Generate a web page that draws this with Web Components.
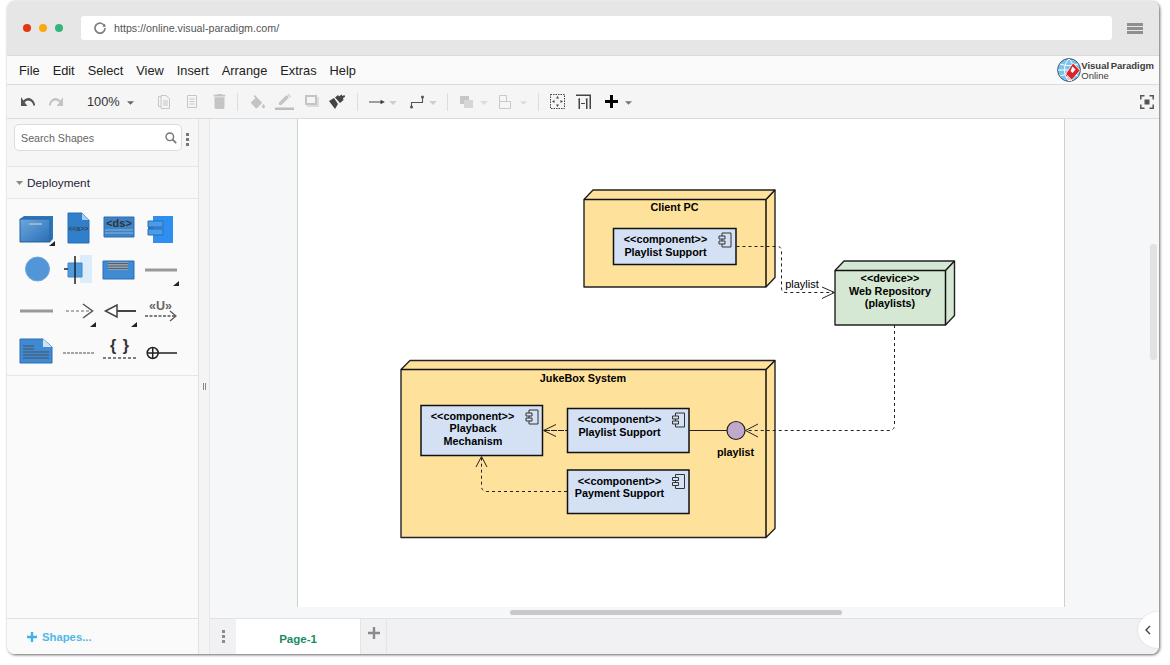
<!DOCTYPE html>
<html>
<head>
<meta charset="utf-8">
<title>Visual Paradigm Online</title>
<style>
html,body{margin:0;padding:0;background:#fff;width:1170px;height:665px;overflow:hidden;font-family:"Liberation Sans",Arial,sans-serif}
body{padding:1px 11px 11px 7px;box-sizing:border-box}
</style>
</head>
<body>
<vp-window>
  <vp-browser-bar url="https://online.visual-paradigm.com/"></vp-browser-bar>
  <vp-menubar></vp-menubar>
  <vp-toolbar></vp-toolbar>
  <vp-workspace>
    <vp-sidebar slot="side"></vp-sidebar>
    <vp-canvas slot="main"><vp-diagram></vp-diagram></vp-canvas>
    <vp-tabs slot="main"></vp-tabs>
  </vp-workspace>
</vp-window>
<script>
function def(name, css, html, init){
  customElements.define(name, class extends HTMLElement{
    connectedCallback(){
      if(this.shadowRoot) return;
      const r=this.attachShadow({mode:'open'});
      r.innerHTML='<style>'+css+'</style>'+(typeof html==='function'?html(this):html);
      if(init) init(r,this);
    }
  });
}

def('vp-window',
`:host{display:flex;flex-direction:column;width:1152px;height:653px;border-radius:8px;overflow:hidden;background:#fafafa;
 box-shadow:1px 1px 3px rgba(0,0,0,.6);font-family:"Liberation Sans",Arial,sans-serif;position:relative}`,
`<slot></slot>`);

def('vp-browser-bar',
`:host{display:flex;align-items:center;height:54px;background:#e6e6e6;border-bottom:1px solid #dadada;padding:0 17px 0 16px;flex:none;box-sizing:content-box;position:relative}
.wrap{display:flex;align-items:center;width:100%;height:100%}
.dot{width:8px;height:8px;border-radius:50%;margin-right:8px;flex:none}
.url{flex:none;width:1031px;height:24px;background:#fff;border-radius:3px;margin-left:10px;display:flex;align-items:center;font-size:10.7px;color:#555}
.url svg{margin:0 8px 0 13px;flex:none}
.menu{margin-left:15px;display:flex;flex-direction:column;gap:1px;width:16px;flex:none}
.menu i{display:block;height:3px;background:#8f8f8f}`,
(h)=>`<div class="wrap">
<span class="dot" style="background:#e5360e"></span><span class="dot" style="background:#fbaa0c"></span><span class="dot" style="background:#30b67c"></span>
<div class="url"><svg width="12" height="12" viewBox="0 0 12 12"><path d="M10.6 4.2A5 5 0 1 0 11 6" fill="none" stroke="#808080" stroke-width="1.7"/><path d="M8.2 4.4 11.6 5 11 1.6z" fill="#808080"/></svg><span>${h.getAttribute('url')}</span></div>
<div class="menu"><i></i><i></i><i></i></div></div>`);

def('vp-menubar',
`:host{display:flex;align-items:center;height:28px;background:#fafafa;border-bottom:1px solid #dcdcdc;padding-left:12px;flex:none;position:relative;font-size:12.8px;color:#222}
span{margin-right:13px;white-space:nowrap}
.logo{margin-left:auto;margin-right:5px;display:flex;align-items:center;gap:0}
.t{display:flex;flex-direction:column;line-height:10px;padding-top:1px}
.t b{font-size:9.5px;font-weight:700;color:#3c3c3c;word-spacing:-1px;white-space:nowrap}
.t em{font-style:normal;font-size:9.5px;color:#3c3c3c}`,
`<span>File</span><span>Edit</span><span>Select</span><span>View</span><span>Insert</span><span>Arrange</span><span>Extras</span><span>Help</span>
<div class="logo"><svg width="24" height="25" viewBox="0 0 24 25">
<circle cx="12" cy="12" r="11.4" fill="#79c4ee" stroke="#41566a" stroke-width="1"/>
<path d="M1 12h22M12 1C6 6 6 18 12 23M12 1c6 5 6 17 0 22M3 6c5 2 13 2 18 0M3 18c5-2 13-2 18 0" fill="none" stroke="#fff" stroke-width="1"/>
<path d="M16 5 23 12.500 14 23 8 17z" fill="#d7252b" stroke="#fff" stroke-width=".7"/>
<path d="M10 18l5 5M8 15l7 7" stroke="#fff" stroke-width=".7"/>
<path d="M15.500 8.500 18.500 11.500 15.500 15 13.500 13z" fill="#fff"/>
</svg><div class="t"><b>Visual Paradigm</b><em>Online</em></div></div>`);

const ic={
 undo:'<svg viewBox="2 7 20 10" width="100%" height="100%" preserveAspectRatio="none"><path fill="#555" d="M12.5 8c-2.65 0-5.05.99-6.9 2.6L2 7v9h9l-3.62-3.62c1.39-1.16 3.16-1.88 5.12-1.88 3.54 0 6.55 2.31 7.6 5.5l2.37-.78C21.08 11.03 17.15 8 12.5 8z"/></svg>',
 redo:'<svg viewBox="2 7 20 10" width="100%" height="100%" preserveAspectRatio="none"><path fill="#c4c4c4" d="M18.4 10.6C16.55 8.99 14.15 8 11.5 8c-4.65 0-8.58 3.03-9.96 7.22L3.9 16c1.05-3.19 4.05-5.5 7.6-5.5 1.95 0 3.73.72 5.12 1.88L13 16h9V7l-3.6 3.6z"/></svg>',
 copy:'<svg viewBox="0 0 12 14" width="100%" height="100%"><g fill="none" stroke="#c6c6c6"><path d="M.5 1.500h5v10h-5z"/><path d="M3 .5h5l3.500 3v10H3z" fill="#f5f5f5"/><path d="M5 6h5M5 8h5M5 10h5"/></g></svg>',
 paste:'<svg viewBox="0 0 10 13" width="100%" height="100%"><g fill="none" stroke="#c6c6c6"><path d="M.5 .5h9v12h-9z"/><path d="M2.500 4h5M2.500 6.500h5M2.500 9h5"/></g></svg>',
 trash:'<svg viewBox="5 3 14 18" width="100%" height="100%"><path fill="#c4c4c4" d="M6 19c0 1.100.9 2 2 2h8c1.100 0 2-.9 2-2V7H6v12zM19 4h-3.500l-1-1h-5l-1 1H5v2h14V4z"/></svg>',
 fill:'<svg viewBox="2 0 20 18" width="100%" height="100%"><path fill="#c4c4c4" d="M16.560 8.940 7.620 0 6.210 1.410l2.380 2.380-5.150 5.150c-.59.59-.59 1.540 0 2.120l5.500 5.500c.29.29.68.44 1.060.44s.77-.15 1.060-.44l5.500-5.500c.59-.58.59-1.530 0-2.120zM19 11.500s-2 2.170-2 3.500c0 1.100.9 2 2 2s2-.9 2-2c0-1.330-2-3.500-2-3.500z"/></svg>',
 line:'<svg viewBox="0 0 19 16" width="100%" height="100%"><path fill="#c4c4c4" d="M4 11V8.500L11.500 1 14 3.500 6.500 11zM12.500 0l1-.0 2.500 2.500-1 1z"/><path fill="#bdbdbd" d="M0 13.500h19v2.500H0z"/></svg>',
 shadow:'<svg viewBox="0 0 14 14" width="100%" height="100%"><path d="M0 0h12v10h-12z" fill="#c4c4c4"/><path d="M2 2h8v6h-8z" fill="#f5f5f5"/><path d="M2 10h10v-8h2v10h-12z" fill="#dcdcdc"/></svg>',
 paint:'<svg viewBox="0 0 16 15" width="100%" height="100%"><path d="M0 7 5 4l4 6-3 5z" fill="#444"/><path d="M6 3.500 9 1l1 1.500L12.500 .5 13.500 2l2-1 .5 2-2 1 .5 2-3.500 3z" fill="#444"/></svg>',
 arrow:'<svg viewBox="0 0 16 8" width="100%" height="100%"><path d="M0 4h14" stroke="#444" stroke-width="1.200"/><path d="M11.500 1.800 16 4l-4.500 2.200z" fill="#444"/></svg>',
 way:'<svg viewBox="0 0 14 14" width="100%" height="100%"><path d="M1.500 12V7.500h11V2" fill="none" stroke="#555" stroke-width="1.100"/><circle cx="1.500" cy="12" r="1.500" fill="#555"/><circle cx="12.500" cy="2" r="1.500" fill="#555"/></svg>',
 front:'<svg viewBox="0 0 13 12" width="100%" height="100%"><path d="M0 0h9v8H0z" fill="#c6c6c6"/><path d="M4 4h9v8H4z" fill="#d6d6d6"/></svg>',
 align:'<svg viewBox="0 0 12 14" width="100%" height="100%"><g fill="none" stroke="#c9c9c9"><path d="M.5 .5h7v6h-7zM.5 6.500h11v7h-11z"/></g></svg>',
 fit:'<svg viewBox="0 0 15 15" width="100%" height="100%"><path d="M.5 .5h14v14H.5z" fill="none" stroke="#444" stroke-dasharray="1.500 1"/><path d="M7.500 2 9 4.500H6zM7.500 13 6 10.500h3zM2 7.500l2.500-1.500v3zM13 7.500 10.500 9V6z" fill="#444"/></svg>',
 oneone:'<svg viewBox="0 0 15 15" width="100%" height="100%"><path d="M0 .5h15V15h-1.500V2H0z" fill="#444"/><path d="M2 5 4 4v11H2.500V6zM9.500 5l2-1v11H10V6z" fill="#444"/><path d="M5 9.500h4" stroke="#444"/></svg>',
 plus:'<svg viewBox="0 0 13 13" width="100%" height="100%"><path d="M5 0h3v5h5v3H8v5H5V8H0V5h5z" fill="#000"/></svg>',
 full:'<svg viewBox="0 0 14 14" width="100%" height="100%"><path d="M.8 4.500V.8h3.700M9.500 .8h3.700v3.700M13.200 9.500v3.700H9.500M4.500 13.200H.8V9.500" fill="none" stroke="#555" stroke-width="1.500"/><path d="M4.500 4.500h5v5h-5z" fill="#555"/></svg>'
};
const car=(c)=>`<svg viewBox="0 0 8 4" width="100%" height="100%"><path d="M0 0h8L4 4z" fill="${c}"/></svg>`;

def('vp-toolbar',
`:host{display:flex;align-items:center;height:33px;background:#f5f5f5;border-bottom:1px solid #dcdcdc;flex:none;position:relative}
.i{flex:none;display:block;line-height:0}
.sep{flex:none;width:1px;height:18px;background:#dddddd}
.z{flex:none;font-size:12.800px;color:#333;width:32px;white-space:nowrap}`,
()=>{
 const D='#777',L='#cfcfcf';
 const items=[
  [21,14,10,ic.undo],[49,14,10,ic.redo],['z',87,32],[127,7,4,car('#666')],
  [158,12,14,ic.copy],[187,10,13,ic.paste],[213,13,15,ic.trash],['s',237],
  [250,16,14,ic.fill],[275,19,16,ic.line],[305,14,14,ic.shadow],[329,16,15,ic.paint],['s',357],
  [369,16,8,ic.arrow],[389,8,4,car(L)],[410,14,14,ic.way],[429,8,4,car(L)],['s',447],
  [460,13,12,ic.front],[480,8,4,car('#dcdcdc')],[499,12,14,ic.align],[520,7,4,car('#dcdcdc')],['s',538],
  [550,15,15,ic.fit],[576,15,15,ic.oneone],[605,13,13,ic.plus],[625,7,4,car(D)],[1140,14,14,ic.full]
 ];
 let cur=7,out='';
 for(const it of items){
  if(it[0]==='z'){out+=`<span class="z" style="margin-left:${it[1]-cur}px">100%</span>`;cur=it[1]+it[2];continue;}
  if(it[0]==='s'){out+=`<span class="sep" style="margin-left:${it[1]-cur}px"></span>`;cur=it[1]+1;continue;}
  out+=`<span class="i" style="margin-left:${it[0]-cur}px;width:${it[1]}px;height:${it[2]}px">${it[3]}</span>`;cur=it[0]+it[1];
 }
 return out;
});

def('vp-workspace',
`:host{display:flex;flex:1;min-height:0}
.side{flex:none;width:191px;display:flex}
.split{flex:none;background:#f4f4f5;border-left:1px solid #e2e2e2;border-right:1px solid #e6e6e6;display:flex;align-items:center;justify-content:center;box-sizing:content-box;width:10px}
.split span{display:block;width:3px;height:7px;border-left:1px solid #888;border-right:1px solid #888;box-sizing:border-box;margin-top:-1px}
.main{flex:1;display:flex;flex-direction:column;min-width:0;position:relative}`,
`<div class="side"><slot name="side"></slot></div><div class="split"><span></span></div><div class="main"><slot name="main"></slot></div>`);

const cell={
 node:`<defs><linearGradient id="g1" x1="0" y1="0" x2="1" y2="1"><stop offset="0" stop-color="#6aa8e0"/><stop offset="1" stop-color="#2a6fb5"/></linearGradient></defs>
 <path d="M3 10l4-3h29v23l-3 3H3z" fill="#2e76bb"/><path d="M3 10h30v23H3z" fill="url(#g1)" stroke="#27619b"/><path d="M12 15h13" stroke="#9ab4ce" stroke-width="2"/><path d="M38 32v5h-6z" fill="#222"/>`,
 doc:`<path d="M10 4h14l7 7v23H10z" fill="#2f7fcb" stroke="#2a6fb5"/><path d="M24 4v7h7z" fill="#a9cdf0"/><text x="20.500" y="22" font-size="7" font-weight="700" text-anchor="middle" fill="#3a4450" font-family="Liberation Sans">&lt;&lt;a&gt;&gt;</text>`,
 ds:`<path d="M5 8h30v20H5z" fill="#3d83c6" stroke="#2a6fb5"/><path d="M6 21h28M6 24h28" stroke="#8ab4dc" stroke-width="1"/><text x="20" y="18" font-size="11" font-weight="700" text-anchor="middle" fill="#333" font-family="Liberation Sans">&lt;ds&gt;</text>`,
 comp:`<path d="M13 7h20v27H13z" fill="#2e8ff0"/><path d="M8 12h15v6H8zM8 20h15v6H8z" fill="#4a9ce8" stroke="#2a6fb5"/><path d="M8 18h5v2H8z" fill="#2a6fb5"/>`,
 circ:`<circle cx="20.500" cy="19" r="12" fill="#5296d8" stroke="#6ea6dd"/>`,
 cross:`<path d="M22 5h12v28H22z" fill="#dcecfb"/><path d="M10 13h14v14H10z" fill="#4f9bdf" stroke="#3f86c8"/><path d="M17 6v28M6 19h4" stroke="#222" stroke-width="1.500"/>`,
 rect:`<path d="M4 11h31v18H4z" fill="#3f8ad2" stroke="#2a6fb5"/><path d="M9 12h20v8H9z" fill="#8fa3b5"/><path d="M9 13.500h20M9 16h20M9 18.500h20" stroke="#555e68" stroke-width="1"/>`,
 line4:`<path d="M5 20h32" stroke="#999" stroke-width="3"/><path d="M39 31v5h-6z" fill="#222"/>`,
 line:`<path d="M3 20h33" stroke="#999" stroke-width="3"/>`,
 dash:`<path d="M8 20h25" stroke="#999" stroke-width="1.500" stroke-dasharray="3 2"/><path d="M25 13l9.500 7-9.500 7" fill="none" stroke="#555" stroke-width="1.500"/><path d="M38 31v5h-6z" fill="#222"/>`,
 tri:`<path d="M6.500 20 18 14v12z" fill="#fff" stroke="#444" stroke-width="1.500"/><path d="M18 20h19" stroke="#444" stroke-width="2"/><path d="M38 31v5h-6z" fill="#222"/>`,
 use:`<text x="20.500" y="19" font-size="12.500" font-weight="700" text-anchor="middle" fill="#666" font-family="Liberation Sans">«U»</text><path d="M5 25h30" stroke="#555" stroke-width="1.500" stroke-dasharray="3 1.500"/><path d="M30 20l6 5-6 5" fill="none" stroke="#555" stroke-width="1.200"/>`,
 note:`<path d="M3 7h23l9 8v16H3z" fill="#3f8ad2" stroke="#2a6fb5"/><path d="M26 7v8h9z" fill="#cfe3f6"/><path d="M6 14h11M6 17h11M6 20h26M6 23h26M6 26h26" stroke="#44505c" stroke-width="1"/>`,
 dash2:`<path d="M5 21h31" stroke="#888" stroke-width="1.500" stroke-dasharray="3 1"/>`,
 brace:`<text x="20.500" y="19" font-size="16" font-weight="700" text-anchor="middle" fill="#333" word-spacing="2" font-family="Liberation Sans">{ }</text><path d="M4 26h33" stroke="#555" stroke-width="1.500" stroke-dasharray="3 2"/>`,
 plusc:`<circle cx="12.700" cy="21" r="5.500" fill="none" stroke="#222" stroke-width="1.500"/><path d="M7 21h30M12.700 15.500v11" stroke="#222" stroke-width="1.500"/>`
};
def('vp-sidebar',
`:host{display:flex;flex-direction:column;width:191px;background:#fafafa;font-size:12px;color:#222;box-sizing:border-box}
.search{flex:none;height:48px;border-bottom:1px solid #e6e6e6;display:flex;align-items:flex-start;padding:5px 0 0 7px;background:#f6f6f6;box-sizing:border-box}
.box{width:168px;height:27px;box-sizing:border-box;border:1px solid #dcdcdc;border-radius:5px;background:#fff;display:flex;align-items:center;padding:0 4px 0 6px;font-size:10.700px;color:#666}
.box svg{margin-left:auto}
.more{display:flex;flex-direction:column;gap:2px;margin:9px 0 0 4px}
.more i{width:3px;height:3px;background:#777;display:block}
.head{flex:none;height:32px;display:flex;align-items:center;padding-left:9px;border-bottom:1px solid #e6e6e6;box-sizing:border-box;font-size:11.800px;color:#1f1f3a;background:#f8f8f8}
.head svg{margin-right:4px}
.grid{flex:none;display:grid;grid-template-columns:repeat(4,41px);grid-auto-rows:41px;padding:10px 0 2px 10px;border-bottom:1px solid #e6e6e6}
.grid svg{width:41px;height:41px;display:block}
.sp{flex:1}
.foot{flex:none;height:36px;border-top:1px solid #e2e2e2;display:flex;align-items:center;padding-left:20px;font-size:11.300px;font-weight:700;color:#52b8e8;box-sizing:border-box}
.foot svg{margin-right:5px}`,
()=>`<div class="search"><div class="box"><span>Search Shapes</span><svg width="12" height="12" viewBox="0 0 12 12"><circle cx="4.800" cy="4.800" r="3.800" fill="none" stroke="#777" stroke-width="1.400"/><path d="M7.700 7.700 11.200 11.200" stroke="#777" stroke-width="1.800"/></svg></div><div class="more"><i></i><i></i><i></i></div></div>
<div class="head"><svg width="7" height="4" viewBox="0 0 7 4"><path d="M0 0h7L3.500 4z" fill="#888"/></svg><span>Deployment</span></div>
<div class="grid">${['node','doc','ds','comp','circ','cross','rect','line4','line','dash','tri','use','note','dash2','brace','plusc'].map(k=>`<svg viewBox="0 0 41 41">${cell[k]}</svg>`).join('')}</div>
<div class="sp"></div>
<div class="foot"><svg width="10" height="10" viewBox="0 0 10 10"><path d="M3.800 0h2.400v3.800H10v2.400H6.200V10H3.800V6.200H0V3.800h3.800z" fill="#3fb4e8"/></svg><span>Shapes...</span></div>`);

def('vp-canvas',
`:host{display:block;flex:1;min-height:0;background:#f6f7f9;position:relative;overflow:hidden}
.page{margin-left:87px;width:766px;height:488px;background:#fff;border-left:1px solid #d0d0d0;border-right:1px solid #d0d0d0}
.vs{position:absolute;left:940px;top:125px;width:7px;height:116px;background:#e2e2e2;border-radius:3px}
.hs{position:absolute;left:300px;top:491px;width:332px;height:5px;background:#c8c8c8;border-radius:3px}`,
`<div class="page"><slot></slot></div><div class="vs"></div><div class="hs"></div>`);

function node3d(x,y,r,b,dx,dy,fill){
 return `<path d="M${x} ${y} L${x+dx} ${y-dy} H${r+dx} V${b-dy} L${r} ${b} H${x} Z" fill="${fill}" stroke="#222" stroke-width="1.400" stroke-linejoin="round"/>
 <path d="M${x} ${y} H${r} V${b} M${r} ${y} L${r+dx} ${y-dy}" fill="none" stroke="#111" stroke-width="1.500"/>`;
}
function cicon(x,y){
 return `<g transform="translate(${x} ${y})" fill="#d4e1f5" stroke="#333" stroke-width="1"><path d="M3.500 .5H12.500V14.500H3.500Z"/><path d="M.5 3.500H6.500V6.500H.5ZM.5 8.500H6.500V11.500H.5Z"/></g>`;
}
function comp(x,y,r,b,ix,iy){
 return `<rect x="${x}" y="${y}" width="${r-x}" height="${b-y}" fill="#d4e1f5" stroke="#111" stroke-width="1.500"/>${cicon(ix,iy)}`;
}
function txt(x,y,s){return `<text x="${x}" y="${y}">${s}</text>`;}
def('vp-diagram',
`:host{display:block;width:766px;height:488px}
svg{display:block}
text{font-family:"Liberation Sans",Arial,sans-serif;font-size:10.800px;font-weight:700;fill:#000;text-anchor:middle}
.lbl{font-weight:400;font-size:11px}
.d{fill:none;stroke:#222;stroke-width:1;stroke-dasharray:3 3}
.a{fill:none;stroke:#222;stroke-width:1}`,
`<svg width="766" height="488" viewBox="298 119 766 488">
${node3d(584,199.5,766,287,9,9.5,'#fee29b')}
${comp(613.5,228.500,736,264.500,718.500,232.500)}
${node3d(835,270.5,945.500,325,9,9.5,'#d5e8d4')}
${node3d(401,369.5,766,537.5,9,9,'#fee29b')}
${comp(421,405.500,542.500,455.500,525.500,409.500)}
${comp(567.500,408.500,689,452.500,672,412.500)}
${comp(567.500,470,689,513.500,672,474)}
<path class="d" d="M736.500 246.500H777Q781.500 246.500 781.500 251V288Q781.500 292.500 786 292.500H834"/>
<path class="a" d="M822 287 834.500 292.500 822 298.500"/>
<rect x="785" y="277" width="35" height="14" fill="#fff"/>
<text class="lbl" x="802" y="288">playlist</text>
<path class="d" d="M894.500 325V425Q894.500 430.500 889 430.500H746"/>
<path class="a" d="M758 424 745.500 430.500 758 437"/>
<path d="M689.500 430.500H727" stroke="#222" stroke-width="1" fill="none"/>
<circle cx="736" cy="430.500" r="9" fill="#c1a9cd" stroke="#222" stroke-width="1.200"/>
<path d="M544 430.500H567" stroke="#222" stroke-width="1" stroke-dasharray="6 1" fill="none"/>
<path class="a" d="M556 424.500 543.500 430.500 556 436.500"/>
<path class="d" d="M567 491.500H487Q481.500 491.500 481.500 486V457"/>
<path class="a" d="M476 467 481.500 456.500 487 467"/>
${txt(674.5,211,'Client PC')}
${txt(665.5,243,'&lt;&lt;component&gt;&gt;')}${txt(665.5,256,'Playlist Support')}
${txt(890,282,'&lt;&lt;device&gt;&gt;')}${txt(890,295,'Web Repository')}${txt(890,307,'(playlists)')}
${txt(583,382,'JukeBox System')}
${txt(472.5,420,'&lt;&lt;component&gt;&gt;')}${txt(473,432,'Playback')}${txt(473,445,'Mechanism')}
${txt(619.500,423,'&lt;&lt;component&gt;&gt;')}${txt(619.500,436,'Playlist Support')}
${txt(619.500,485,'&lt;&lt;component&gt;&gt;')}${txt(619.500,497,'Payment Support')}
${txt(735.500,456,'playlist')}
</svg>`);

def('vp-tabs',
`:host{display:flex;flex:none;height:36px;background:#f1f1f3;border-top:1px solid #e2e2e2;box-sizing:border-box;position:relative}
.dots{width:26px;display:flex;flex-direction:column;gap:2px;align-items:center;justify-content:center;box-sizing:border-box}
.dots i{display:block;width:3px;height:3px;background:#8c8c8c}
.tab{width:124px;background:#fff;display:flex;align-items:center;justify-content:center;font-size:11.500px;font-weight:700;color:#1b8a5f;padding-top:5px;box-sizing:border-box}
.add{width:27px;border-right:1px solid #e4e4e4;border-left:1px solid #e4e4e4;display:flex;align-items:flex-start;justify-content:center;padding-top:8px;box-sizing:border-box}
.col{position:absolute;right:-19px;top:-7px;width:40px;height:36px;background:#fff;border-radius:50%;display:flex;align-items:center;padding-left:7px;box-sizing:border-box;box-shadow:0 0 2px rgba(0,0,0,.15)}`,
`<div class="dots"><i></i><i></i><i></i></div><div class="tab">Page-1</div>
<div class="add"><svg width="12" height="12" viewBox="0 0 12 12"><path d="M4.800 0h2.400v4.800H12v2.400H7.200V12H4.800V7.200H0V4.800h4.800z" fill="#8a8a8a"/></svg></div>
<div class="col"><svg width="6" height="10" viewBox="0 0 6 10"><path d="M5 1 1 5l4 4" fill="none" stroke="#444" stroke-width="1.400"/></svg></div>`);
</script>
</body>
</html>
